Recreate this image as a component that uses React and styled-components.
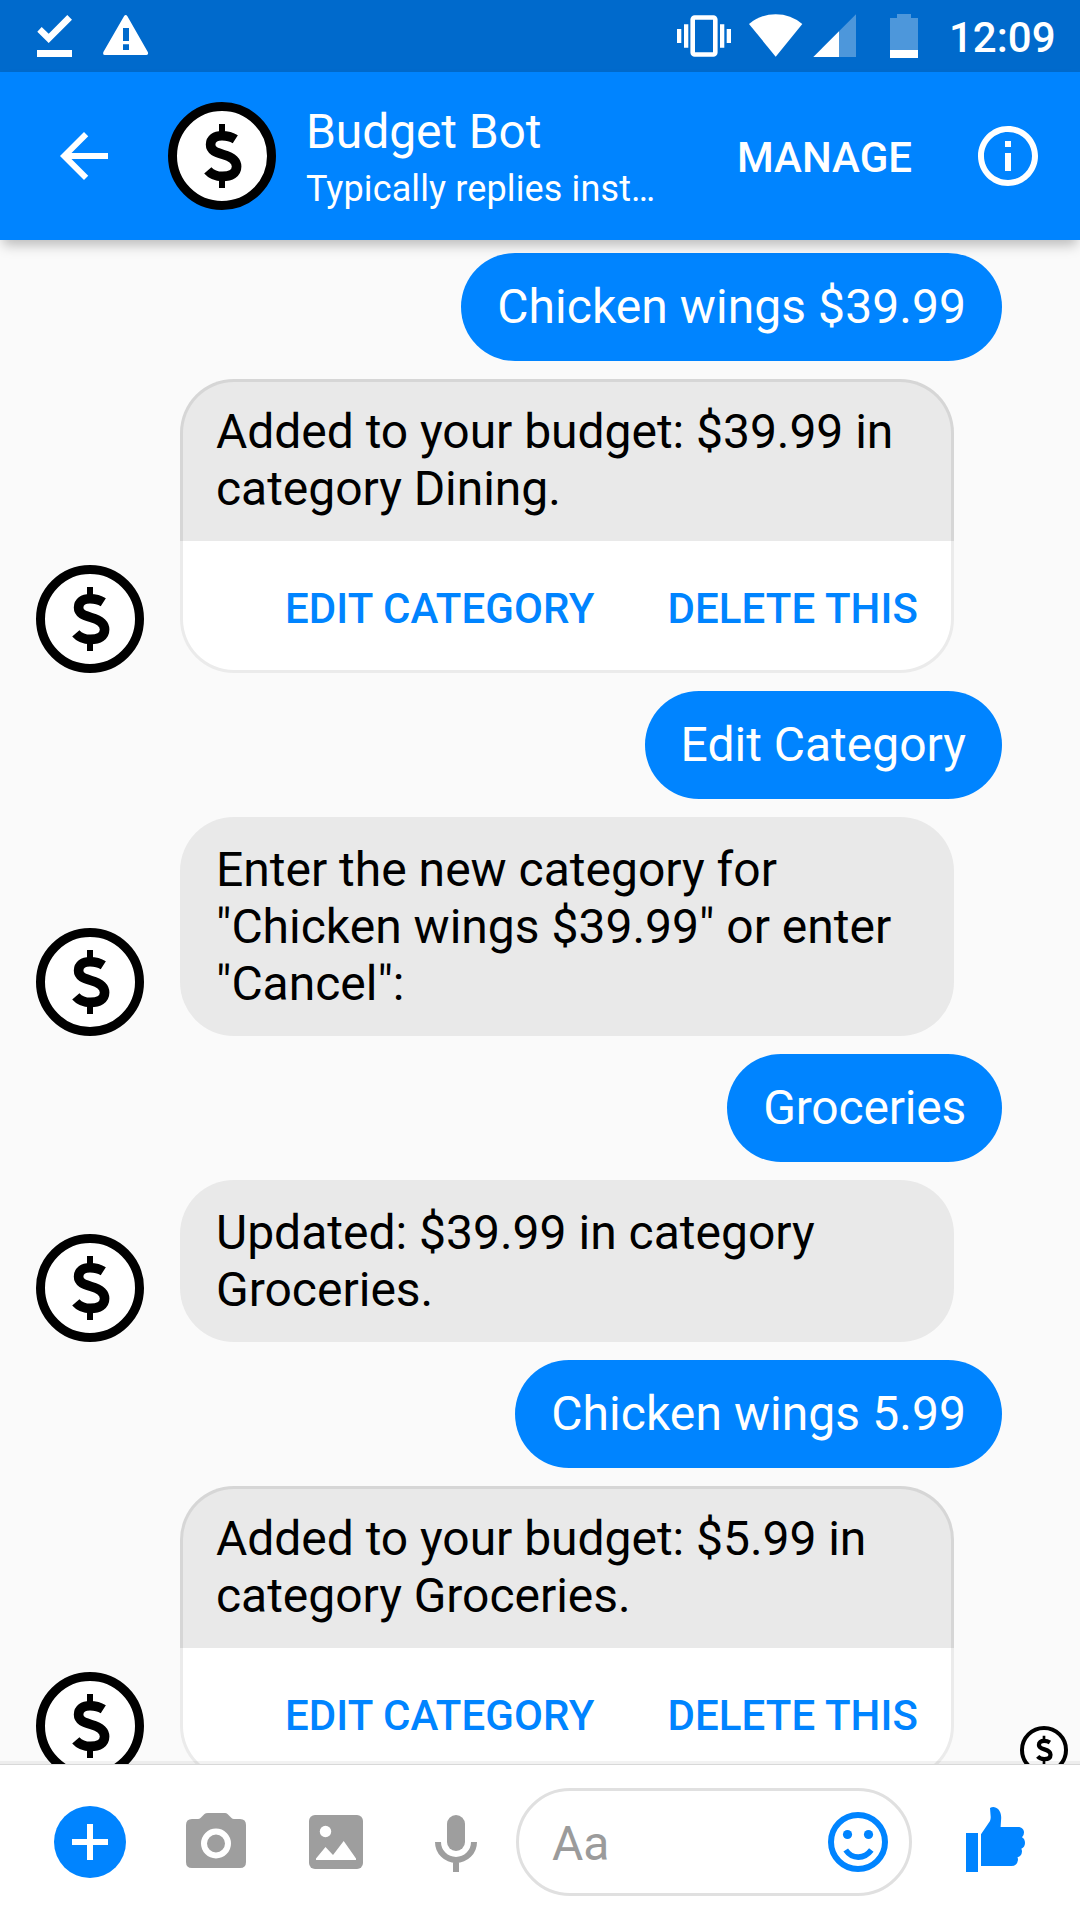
import React from "react";
import styled, { createGlobalStyle } from "styled-components";
import { MdArrowBack, MdInfoOutline } from "react-icons/md";

const BLUE = "#0084ff";

const GlobalStyle = createGlobalStyle`
  * { box-sizing: border-box; }
  html, body { margin: 0; padding: 0; background: #fafafa; }
  button { font: inherit; color: inherit; background: none; border: 0; padding: 0; margin: 0; }
  svg { display: block; flex: none; }
`;

const Screen = styled.div`
  width: 1080px;
  height: 1920px;
  display: flex;
  flex-direction: column;
  overflow: hidden;
  background: #fafafa;
  font-family: Roboto, "Liberation Sans", sans-serif;
  font-size: 48px;
  line-height: 57px;
  color: #000;
`;

const StatusBar = styled.div`
  flex: none;
  height: 72px;
  padding: 0 23px 0 36px;
  display: flex;
  align-items: flex-start;
  justify-content: space-between;
  background: #006acc;
  color: #fff;
`;

const StatusGroup = styled.div`
  display: flex;
  align-items: flex-start;
`;

const Clock = styled.span`
  width: 108px;
  margin: 13px 0 0 31px;
  font-size: 42px;
  line-height: 49px;
  font-weight: 500;
  white-space: nowrap;
`;

const Header = styled.header`
  position: relative;
  z-index: 1;
  flex: none;
  height: 168px;
  padding: 0 36px 0 48px;
  display: flex;
  align-items: center;
  background: ${BLUE};
  color: #fff;
  box-shadow: 0 8px 12px -3px rgba(0, 0, 0, 0.26);
`;

const IconButton = styled.button`
  flex: none;
  display: flex;
  font-size: 72px;
`;

const HeaderAvatar = styled.div`
  margin: 0 30px 0 48px;
`;

const Titles = styled.div`
  flex: 1;
  display: flex;
  flex-direction: column;
  gap: 8px;
  padding-top: 2px;
  white-space: nowrap;
`;

const Title = styled.div`
  font-size: 48px;
  line-height: 56px;
  letter-spacing: -0.1px;
`;

const Subtitle = styled.div`
  font-size: 36px;
  line-height: 42px;
  letter-spacing: 0.12px;
`;

const Manage = styled.button`
  margin: 3px 60px 0 0;
  font-size: 42px;
  line-height: 49px;
  font-weight: 500;
`;

const Chat = styled.main`
  flex: none;
  height: 1524px;
  padding: 13px 0 0 36px;
  display: flex;
  flex-direction: column;
  gap: 18px;
  overflow: hidden;
`;

const SentRow = styled.div`
  flex: none;
  display: flex;
  justify-content: flex-end;
  padding-right: 78px;
`;

const ReceivedRow = styled.div`
  flex: none;
  display: flex;
  align-items: flex-end;
  gap: 36px;
`;

const Bubble = styled.div`
  min-height: 108px;
  padding: ${(p) => (p.$sent ? "23px 36px 25px" : "24px 36px")};
  display: flex;
  align-items: center;
  border-radius: 54px;
  width: ${(p) => (p.$sent ? "auto" : "774px")};
  background: ${(p) => (p.$sent ? BLUE : "#e9e9e9")};
  color: ${(p) => (p.$sent ? "#fff" : "#000")};
  letter-spacing: ${(p) => p.$tracking || 0}px;
  white-space: pre;
`;

const Card = styled.div`
  width: 774px;
`;

const CardText = styled.div`
  height: 162px;
  padding: 21px 33px 0;
  border: 3px solid #d6d6d6;
  border-bottom: 0;
  border-radius: 54px 54px 0 0;
  background: #e9e9e9;
  letter-spacing: -0.04px;
  white-space: pre;
`;

const CardActions = styled.div`
  height: 132px;
  padding: 43px 33px 0;
  display: flex;
  align-items: flex-start;
  justify-content: flex-end;
  gap: 73px;
  border: 3px solid #ebebeb;
  border-top: 0;
  border-radius: 0 0 54px 54px;
  background: #fff;
`;

const CardAction = styled.button`
  color: ${BLUE};
  font-size: 42px;
  line-height: 49px;
  font-weight: 500;
  letter-spacing: 0.1px;
  white-space: nowrap;
`;

const ReadReceipt = styled.div`
  margin: 0 0 6px 30px;
`;

const Composer = styled.footer`
  position: relative;
  flex: none;
  height: 156px;
  padding: 0 54px 1px;
  display: flex;
  align-items: center;
  border-top: 1px solid #d8d8d8;
  background: #fff;

  &::before {
    content: "";
    position: absolute;
    left: 0;
    right: 0;
    top: -4px;
    height: 3px;
    background: rgba(0, 0, 0, 0.05);
  }
`;

const Tools = styled.div`
  display: flex;
  align-items: center;
  margin-right: 39px;
`;

const Tool = styled.button`
  display: flex;
  margin-left: ${(p) => p.$gap || 0}px;
`;

const Field = styled.div`
  width: 396px;
  height: 108px;
  margin-right: 54px;
  padding: 0 21px 0 33px;
  display: flex;
  align-items: center;
  justify-content: space-between;
  border: 3px solid #e0e0e0;
  border-radius: 54px;
  color: #9b9b9b;
`;

const Placeholder = styled.span`
  padding-top: 3px;
`;

const CoinAvatar = ({ size = 108, ring = 9 }) => (
  <svg width={size} height={size} viewBox="0 0 108 108" fill="none" stroke="#000">
    <circle cx="54" cy="54" r={54 - ring / 2} fill="#fff" strokeWidth={ring} />
    <path strokeWidth="6" d="M54 22v10M54 76v10" />
    <path
      strokeWidth="9.6"
      d="M67.3 37.2C63.5 34.8 59 33.7 54 33.7C47 33.7 42.6 37 42.6 42.5C42.6 48.5 48 50.5 55 52.5C62.5 54.6 68.6 57.5 68.6 64.5C68.6 71.2 63 74.4 54.5 74.4C48.5 74.4 43.5 72.5 39.8 68.3"
    />
  </svg>
);

const DownloadDoneIcon = () => (
  <svg width="36" height="72" viewBox="36 0 36 72" fill="#fff">
    <path d="M41.7 27L37.3 31.7L48.7 43L72 19.7L67.3 15L48.7 33.7z" />
    <path d="M37 50h35v7H37z" />
  </svg>
);

const WarningSvg = styled.svg`
  margin-left: 31px;
`;

const WarningIcon = () => (
  <WarningSvg width="46" height="72" viewBox="103 0 46 72">
    <path
      fill="#fff"
      fillRule="evenodd"
      d="M124 16.2Q125.7 13.8 127.4 16.2L147.8 52Q148.8 55 146.5 55H104.8Q102.5 55 103.4 52zM123 28v13h6V28zM123 44.3v5.7h6v-5.7z"
    />
  </WarningSvg>
);

const VibrateIcon = () => (
  <svg width="54" height="72" viewBox="677 0 54 72" fill="#fff">
    <path d="M677 29h4.3v14H677zM684 24.3h4.3v23.4H684zM720 24.3h4.3v23.4H720zM726.7 29h4.3v14h-4.3z" />
    <rect x="692.7" y="17.5" width="22.6" height="37" rx="2" fill="none" stroke="#fff" strokeWidth="4.6" />
  </svg>
);

const WifiSvg = styled.svg`
  margin-left: 18px;
`;

const WifiIcon = () => (
  <WifiSvg width="54" height="72" viewBox="749 0 54 72">
    <path fill="#fff" d="M749 24Q760.5 14.2 775.7 14.2T802.3 24L775.7 56.7z" />
  </WifiSvg>
);

const SignalSvg = styled.svg`
  margin-left: 10px;
`;

const SignalIcon = () => (
  <SignalSvg width="43" height="72" viewBox="813 0 43 72" fill="#fff">
    <path fillOpacity="0.3" d="M856 14.3V57H839V31.3z" />
    <path d="M813.3 57L839 31.3V57z" />
  </SignalSvg>
);

const BatterySvg = styled.svg`
  margin-left: 34px;
`;

const BatteryIcon = () => (
  <BatterySvg width="28" height="72" viewBox="890 0 28 72" fill="#fff">
    <path fillOpacity="0.3" d="M897 14h14v4h7v32h-28V18h7z" />
    <path d="M890 50h28v8h-28z" />
  </BatterySvg>
);

const PlusIcon = () => (
  <svg width="72" height="72" viewBox="0 0 72 72">
    <circle cx="36" cy="36" r="36" fill={BLUE} />
    <path d="M18 36h36M36 18v36" stroke="#fff" strokeWidth="6" />
  </svg>
);

const CameraIcon = () => (
  <svg width="60" height="72" viewBox="186 1806 60 72">
    <path
      fill="#9e9e9e"
      d="M208 1813h17q1.500 0 2.500 1l4 4q1 1 2.500 1h6q6 0 6 6v37q0 6-6 6h-48q-6 0-6-6v-37q0-6 6-6h6q1.500 0 2.500-1l4-4q1-1 3.500-1z"
    />
    <circle cx="216" cy="1843.500" r="12" fill="none" stroke="#fff" strokeWidth="6" />
  </svg>
);

const ImageIcon = () => (
  <svg width="54" height="72" viewBox="309 1806 54 72">
    <rect x="309" y="1815" width="54" height="54" rx="6" fill="#9e9e9e" />
    <circle cx="325.500" cy="1831.500" r="5.700" fill="#fff" />
    <path fill="#fff" d="M316 1860v-1.500L325.500 1847L333 1855L343.700 1841L356 1858.500V1860z" />
  </svg>
);

const MicIcon = () => (
  <svg width="42" height="72" viewBox="435 1806 42 72">
    <rect x="447" y="1815" width="18" height="36" rx="9" fill="#9e9e9e" />
    <path d="M438 1842a18 18 0 0 0 36 0M456 1858v14" fill="none" stroke="#9e9e9e" strokeWidth="6" />
  </svg>
);

const SmileIcon = () => (
  <svg width="60" height="60" viewBox="0 0 60 60" fill={BLUE}>
    <circle cx="30" cy="30" r="27" fill="none" stroke={BLUE} strokeWidth="6" />
    <circle cx="19.500" cy="22.500" r="4.600" />
    <circle cx="40.500" cy="22.500" r="4.600" />
    <path d="M17.700 38Q22.500 45.100 30.300 45.100T43.300 38" fill="none" stroke={BLUE} strokeWidth="5.600" />
  </svg>
);

const ThumbIcon = () => (
  <svg width="60" height="72" viewBox="966 1806 60 72" fill={BLUE}>
    <path d="M966 1833h12v39h-12z" />
    <path d="M981 1866V1834.300L990 1821Q990.700 1819.500 990.700 1817L990 1808Q991.500 1807 993.500 1807C999 1807.500 1001.300 1813 1001.200 1818L1000.600 1827H1018C1022 1827 1024 1829.500 1024 1832.500Q1024 1835.500 1022 1837.300C1024 1838.500 1025 1840.500 1025 1843Q1025 1847 1021.300 1848.800Q1022 1850 1022 1851.500Q1021.700 1856 1017.500 1857.300Q1018 1858.300 1018 1860Q1017 1866 1011.500 1866z" />
  </svg>
);

const SentMessage = ({ children, tracking }) => (
  <SentRow>
    <Bubble $sent $tracking={tracking}>{children}</Bubble>
  </SentRow>
);

const ReceivedMessage = ({ children }) => (
  <ReceivedRow>
    <CoinAvatar />
    <Bubble>{children}</Bubble>
  </ReceivedRow>
);

const BudgetCard = ({ children }) => (
  <Card>
    <CardText>{children}</CardText>
    <CardActions>
      <CardAction>EDIT CATEGORY</CardAction>
      <CardAction>DELETE THIS</CardAction>
    </CardActions>
  </Card>
);

export default function App() {
  return (
    <Screen>
      <GlobalStyle />
      <StatusBar>
        <StatusGroup>
          <DownloadDoneIcon />
          <WarningIcon />
        </StatusGroup>
        <StatusGroup>
          <VibrateIcon />
          <WifiIcon />
          <SignalIcon />
          <BatteryIcon />
          <Clock>12:09</Clock>
        </StatusGroup>
      </StatusBar>
      <Header>
        <IconButton aria-label="Back">
          <MdArrowBack />
        </IconButton>
        <HeaderAvatar>
          <CoinAvatar />
        </HeaderAvatar>
        <Titles>
          <Title>Budget Bot</Title>
          <Subtitle>Typically replies inst…</Subtitle>
        </Titles>
        <Manage>MANAGE</Manage>
        <IconButton aria-label="Info">
          <MdInfoOutline />
        </IconButton>
      </Header>
      <Chat>
        <SentMessage tracking={0.06}>Chicken wings $39.99</SentMessage>
        <ReceivedRow>
          <CoinAvatar />
          <BudgetCard>{"Added to your budget: $39.99 in\ncategory Dining."}</BudgetCard>
        </ReceivedRow>
        <SentMessage>Edit Category</SentMessage>
        <ReceivedMessage>
          {'Enter the new category for\n"Chicken wings $39.99" or enter\n"Cancel":'}
        </ReceivedMessage>
        <SentMessage tracking={-0.2}>Groceries</SentMessage>
        <ReceivedMessage>{"Updated: $39.99 in category\nGroceries."}</ReceivedMessage>
        <SentMessage tracking={0.06}>Chicken wings 5.99</SentMessage>
        <ReceivedRow>
          <CoinAvatar />
          <BudgetCard>{"Added to your budget: $5.99 in\ncategory Groceries."}</BudgetCard>
          <ReadReceipt>
            <CoinAvatar size={48} />
          </ReadReceipt>
        </ReceivedRow>
      </Chat>
      <Composer>
        <Tools>
          <Tool aria-label="More"><PlusIcon /></Tool>
          <Tool aria-label="Camera" $gap={60}><CameraIcon /></Tool>
          <Tool aria-label="Photos" $gap={63}><ImageIcon /></Tool>
          <Tool aria-label="Voice" $gap={72}><MicIcon /></Tool>
        </Tools>
        <Field>
          <Placeholder>Aa</Placeholder>
          <SmileIcon />
        </Field>
        <Tool aria-label="Like"><ThumbIcon /></Tool>
      </Composer>
    </Screen>
  );
}
